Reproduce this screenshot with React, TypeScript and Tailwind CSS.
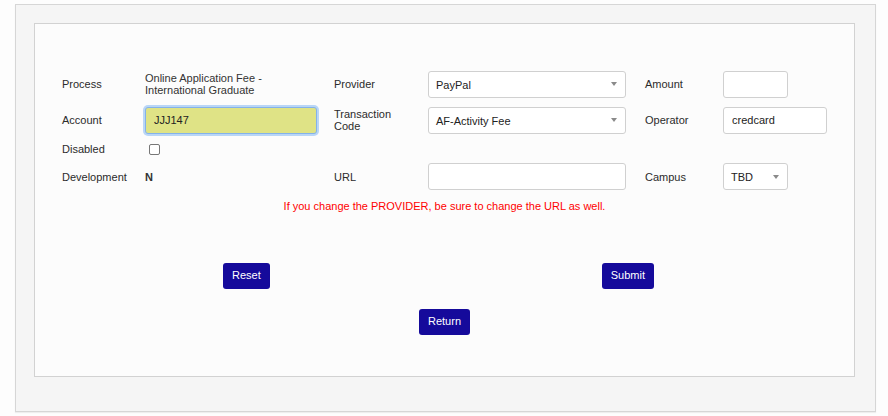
import type { ReactNode } from 'react';

function Label({ children }: { children: ReactNode }) {
  return <div className="self-center text-[#2b2b2b] leading-[12px]">{children}</div>;
}

function TextBox({ value = '', width, focused = false }: { value?: string; width: string; focused?: boolean }) {
  const base = 'self-center h-[27px] rounded-[3px] px-[8px] text-[11px] text-[#222] outline-none';
  return focused ? (
    <input
      readOnly
      value={value}
      className={`${base} ${width} border border-[#84b2ea] bg-[#dfe386] shadow-[0_0_0_2px_#b9d6f7]`}
    />
  ) : (
    <input readOnly value={value} className={`${base} ${width} border border-[#d0d0d0] bg-white`} />
  );
}

function SelectBox({ value, width }: { value: string; width: string }) {
  return (
    <div
      className={`self-center flex h-[27px] items-center justify-between rounded-[3px] border border-[#d0d0d0] bg-white pl-[7px] pr-[8px] text-[#222] ${width}`}
    >
      <span className="pt-[2px]">{value}</span>
      <span className="h-0 w-0 border-x-[3px] border-t-[4px] border-x-transparent border-t-[#8a8a8a]" />
    </div>
  );
}

function Button({ children }: { children: ReactNode }) {
  return (
    <button className="h-[26px] rounded-[3px] bg-[#150a9b] px-[9px] text-[11px] text-white">{children}</button>
  );
}

export default function App() {
  return (
    <div className="min-h-screen bg-[#fdfdfd] pl-[15px] pt-[4px] font-['Liberation_Sans',Arial,sans-serif] text-[11px]">
      <div className="box-border h-[408px] w-[861px] border border-[#d6d6d6] bg-[#f5f5f5] p-[18px] shadow-[0_1px_1px_rgba(0,0,0,0.06)]">
        <div className="box-border flex h-[354px] w-[821px] flex-col border border-[#d2d2d2] bg-[#fcfcfc] pt-[45px]">
          <div className="grid grid-cols-[83px_189px_94px_217px_78px_1fr] grid-rows-[30px_30px_16px_27px] gap-y-[6px] pl-[27px]">
            <Label>Process</Label>
            <div className="self-center leading-[12px] text-[#333]">
              Online Application Fee -<br />
              International Graduate
            </div>
            <Label>Provider</Label>
            <SelectBox value="PayPal" width="w-[198px]" />
            <Label>Amount</Label>
            <TextBox width="w-[65px]" />

            <Label>Account</Label>
            <TextBox value="JJJ147" width="w-[172px]" focused />
            <Label>
              Transaction
              <br />
              Code
            </Label>
            <SelectBox value="AF-Activity Fee" width="w-[198px]" />
            <Label>Operator</Label>
            <TextBox value="credcard" width="w-[104px]" />

            <Label>Disabled</Label>
            <div className="self-center pl-[4px]">
              <div className="h-[11px] w-[11px] rounded-[2px] border border-[#777] bg-white" />
            </div>
            <div />
            <div />
            <div />
            <div />

            <Label>Development</Label>
            <div className="self-center pt-[2px] font-bold text-[#333]">N</div>
            <Label>URL</Label>
            <TextBox width="w-[198px]" />
            <Label>Campus</Label>
            <SelectBox value="TBD" width="w-[65px]" />
          </div>

          <p className="mt-[8px] text-center text-[11px] text-[#ff0000]">
            If you change the PROVIDER, be sure to change the URL as well.
          </p>

          <div className="mt-[48px] flex justify-between pl-[188px] pr-[200px]">
            <Button>Reset</Button>
            <Button>Submit</Button>
          </div>

          <div className="mt-[20px] flex justify-center">
            <Button>Return</Button>
          </div>
        </div>
      </div>
    </div>
  );
}
